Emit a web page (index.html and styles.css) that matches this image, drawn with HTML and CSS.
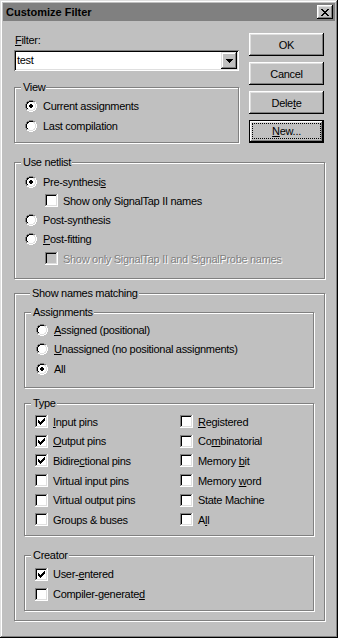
FILE: index.html
```
<!DOCTYPE html>
<html lang="en">
<head>
  <meta charset="UTF-8">
  <title>Customize Filter</title>
  <link rel="stylesheet" href="styles.css">
</head>
<body>
  <svg class="defs" width="0" height="0">
    <symbol id="radio" viewBox="0 0 12 12">
      <path fill="#fff" d="M4 2h4v1h1v1h1v4h-1v1h-1v1H4v-1H3v-1H2V4h1V3h1z"/>
      <path fill="#808080" d="M4 0h4v1H4z M2 1h2v1H2z M8 1h2v1H8z M1 2h1v2H1z M0 4h1v4H0z M1 8h1v2H1z"/>
      <path fill="#000" d="M4 1h4v1H4z M2 2h2v1H2z M2 3h1v1H2z M1 4h1v4H1z M2 8h1v1H2z"/>
      <path fill="#dfdfdf" d="M8 2h2v1H8z M9 3h1v1H9z M10 4h1v4h-1z M9 8h1v1H9z M2 9h2v1H2z M8 9h2v1H8z M4 10h4v1H4z"/>
      <path fill="#fff" d="M10 2h1v2h-1z M11 4h1v4h-1z M10 8h1v2h-1z M2 10h2v1H2z M8 10h2v1H8z M4 11h4v1H4z"/>
    </symbol>
    <symbol id="dot" viewBox="0 0 12 12">
      <path fill="#000" d="M5 4h2v1h1v2h-1v1H5v-1H4V5h1z"/>
    </symbol>
    <symbol id="box" viewBox="0 0 13 13">
      <rect x="2" y="2" width="9" height="9" fill="currentColor"/>
      <path fill="#808080" d="M0 0h12v1H1v11H0z"/>
      <path fill="#000" d="M1 1h10v1H2v9H1z"/>
      <path fill="#dfdfdf" d="M11 1h1v11H1v-1h10z"/>
      <path fill="#fff" d="M12 0h1v13H0v-1h12z"/>
    </symbol>
    <symbol id="tick" viewBox="0 0 13 13">
      <path fill="#000" d="M9 3h1v1H9z M8 4h2v1H8z M3 5h1v1H3z M7 5h3v1H7z M3 6h2v1H3z M6 6h3v1H6z M3 7h5v1H3z M4 8h3v1H4z M5 9h1v1H5z"/>
    </symbol>
  </svg>

  <div class="window">
    <div class="titlebar">
      <span class="title">Customize Filter</span>
      <span class="close">
        <svg width="8" height="7" viewBox="0 0 8 7" shape-rendering="crispEdges"><path fill="#000" d="M0 0h2v1H0z M6 0h2v1H6z M1 1h2v1H1z M5 1h2v1H5z M2 2h4v1H2z M3 3h2v1H3z M2 4h4v1H2z M1 5h2v1H1z M5 5h2v1H5z M0 6h2v1H0z M6 6h2v1H6z"/></svg>
      </span>
    </div>

    <div class="dialog">
      <div class="top">
        <div class="left">
          <div class="field-label"><u>F</u>ilter:</div>
          <div class="combo">
            <span class="combo-text">test</span>
            <span class="combo-btn">
              <svg width="7" height="4" viewBox="0 0 7 4" shape-rendering="crispEdges"><path fill="#000" d="M0 0h7v1H0z M1 1h5v1H1z M2 2h3v1H2z M3 3h1v1H3z"/></svg>
            </span>
          </div>

          <div class="group view">
            <div class="group-title">View</div>
            <div class="rows">
              <div class="row"><svg class="radio"><use href="#radio"/><use href="#dot"/></svg><span>Current assignments</span></div>
              <div class="row"><svg class="radio"><use href="#radio"/></svg><span>Last compilation</span></div>
            </div>
          </div>
        </div>

        <div class="buttons">
          <div class="btn"><span>OK</span></div>
          <div class="btn"><span>Cancel</span></div>
          <div class="btn"><span>Dele<u>t</u>e</span></div>
          <div class="btn default"><span class="focus"><span><u>N</u>ew...</span></span></div>
        </div>
      </div>

      <div class="group netlist">
        <div class="group-title">Use netlist</div>
        <div class="rows">
          <div class="row"><svg class="radio"><use href="#radio"/><use href="#dot"/></svg><span>Pre-synthesi<u>s</u></span></div>
          <div class="row indent"><svg class="check"><use href="#box"/></svg><span>Show only SignalTap II names</span></div>
          <div class="row"><svg class="radio"><use href="#radio"/></svg><span>Post-synthesis</span></div>
          <div class="row"><svg class="radio"><use href="#radio"/></svg><span><u>P</u>ost-fitting</span></div>
          <div class="row indent disabled"><svg class="check"><use href="#box"/></svg><span>Show only SignalTap II and SignalProbe names</span></div>
        </div>
      </div>

      <div class="group matching">
        <div class="group-title">Show names matching</div>

        <div class="group assignments">
          <div class="group-title">Assignments</div>
          <div class="rows">
            <div class="row"><svg class="radio"><use href="#radio"/></svg><span><u>A</u>ssigned (positional)</span></div>
            <div class="row"><svg class="radio"><use href="#radio"/></svg><span><u>U</u>nassigned (no positional assignments)</span></div>
            <div class="row"><svg class="radio"><use href="#radio"/><use href="#dot"/></svg><span>All</span></div>
          </div>
        </div>

        <div class="group type">
          <div class="group-title">Type</div>
          <div class="rows type-grid">
            <div class="row"><svg class="check"><use href="#box"/><use href="#tick"/></svg><span><u>I</u>nput pins</span></div>
            <div class="row"><svg class="check"><use href="#box"/><use href="#tick"/></svg><span><u>O</u>utput pins</span></div>
            <div class="row"><svg class="check"><use href="#box"/><use href="#tick"/></svg><span>Bidire<u>c</u>tional pins</span></div>
            <div class="row"><svg class="check"><use href="#box"/></svg><span>Virtual input pins</span></div>
            <div class="row"><svg class="check"><use href="#box"/></svg><span>Virtual output pins</span></div>
            <div class="row"><svg class="check"><use href="#box"/></svg><span>Groups &amp; buses</span></div>
            <div class="row"><svg class="check"><use href="#box"/></svg><span><u>R</u>egistered</span></div>
            <div class="row"><svg class="check"><use href="#box"/></svg><span>Co<u>m</u>binatorial</span></div>
            <div class="row"><svg class="check"><use href="#box"/></svg><span>Memory <u>b</u>it</span></div>
            <div class="row"><svg class="check"><use href="#box"/></svg><span>Memory <u>w</u>ord</span></div>
            <div class="row"><svg class="check"><use href="#box"/></svg><span>State Machine</span></div>
            <div class="row"><svg class="check"><use href="#box"/></svg><span>A<u>l</u>l</span></div>
          </div>
        </div>

        <div class="group creator">
          <div class="group-title">Creator</div>
          <div class="rows">
            <div class="row"><svg class="check"><use href="#box"/><use href="#tick"/></svg><span>User-<u>e</u>ntered</span></div>
            <div class="row"><svg class="check"><use href="#box"/></svg><span>Compiler-generate<u>d</u></span></div>
          </div>
        </div>
      </div>
    </div>
  </div>
</body>
</html>
```

FILE: styles.css
```
body {
  margin: 0;
  background: #c0c0c0;
  font-family: "Liberation Sans", Arial, sans-serif;
  font-size: 11px;
  color: #000;
}
.defs {
  position: absolute;
  width: 0;
  height: 0;
}
.window {
  width: 338px;
  height: 638px;
  box-sizing: border-box;
  padding: 3px;
  background: #c0c0c0;
  box-shadow: inset -1px -1px #000, inset 1px 1px #dfdfdf, inset -2px -2px #808080, inset 2px 2px #fff;
}
.titlebar {
  height: 18px;
  background: #808080;
  display: flex;
  align-items: center;
  justify-content: space-between;
  padding: 0 2px 0 3px;
}
.title {
  font-weight: bold;
  line-height: 18px;
}
.close {
  width: 16px;
  height: 14px;
  display: flex;
  align-items: center;
  justify-content: center;
  background: #c0c0c0;
  box-shadow: inset -1px -1px #000, inset 1px 1px #fff, inset -2px -2px #808080, inset 2px 2px #dfdfdf;
}
.dialog {
  padding: 12px 10px 0 11px;
  letter-spacing: -0.3px;
}
.top {
  display: flex;
  gap: 10px;
  align-items: flex-start;
}
.left {
  width: 225px;
  padding-top: 1px;
}
.field-label {
  line-height: 13px;
  padding-left: 1px;
}
.combo {
  margin-top: 3px;
  height: 21px;
  box-sizing: border-box;
  padding: 2px;
  display: flex;
  background: #fff;
  box-shadow: inset 1px 1px #808080, inset -1px -1px #fff, inset 2px 2px #000, inset -2px -2px #dfdfdf;
}
.combo-text {
  flex: 1;
  padding-left: 1px;
  line-height: 17px;
}
.combo-btn {
  width: 16px;
  height: 17px;
  display: flex;
  align-items: center;
  justify-content: center;
  background: #c0c0c0;
  box-shadow: inset -1px -1px #000, inset 1px 1px #dfdfdf, inset -2px -2px #808080, inset 2px 2px #fff;
}
.buttons {
  width: 75px;
  display: flex;
  flex-direction: column;
  gap: 6px;
}
.btn {
  height: 23px;
  box-sizing: border-box;
  display: flex;
  align-items: center;
  justify-content: center;
  box-shadow: inset -1px -1px #000, inset 1px 1px #fff, inset -2px -2px #808080, inset 2px 2px #dfdfdf;
}
.btn.default {
  border: 1px solid #000;
  padding: 2px 2px 3px 2px;
  align-items: stretch;
}
.focus {
  flex: 1;
  border: 1px dotted #000;
  display: flex;
  align-items: center;
  justify-content: center;
}

.group {
  box-sizing: border-box;
  border: 1px solid #808080;
  box-shadow: 1px 1px 0 #fff, inset 1px 1px 0 #fff;
}
.group-title {
  width: max-content;
  margin: -7px 0 0 6px;
  padding: 0 1px 0 2px;
  background: #c0c0c0;
  line-height: 13px;
}
.rows {
  padding: 2px 0 0 10px;
}
.row {
  height: 19.6px;
  display: flex;
  align-items: center;
  white-space: nowrap;
}
.row.indent {
  padding-left: 20px;
}
.radio {
  width: 12px;
  height: 12px;
  margin-right: 6px;
  flex: none;
  shape-rendering: crispEdges;
}
.check {
  width: 13px;
  height: 13px;
  margin-right: 5px;
  flex: none;
  color: #fff;
  shape-rendering: crispEdges;
}
.disabled {
  color: #808080;
  text-shadow: 1px 1px 0 #fff;
}
.disabled .check {
  color: #c0c0c0;
}

.view {
  margin-top: 16px;
  height: 56px;
}
.view .row {
  height: 20px;
}
.netlist {
  margin-top: 19px;
  height: 117px;
}
.netlist .rows {
  padding-top: 3px;
}
.netlist .row {
  height: 19.25px;
}
.matching {
  margin-top: 14px;
  height: 328px;
  padding: 0 10px 0 9px;
}
.assignments {
  margin-top: 12px;
  height: 76px;
}
.assignments .rows {
  padding: 1px 0 0 11px;
}
.type {
  margin-top: 15px;
  height: 133px;
}
.type-grid {
  display: grid;
  grid-template-columns: 145px 1fr;
  grid-template-rows: repeat(6, 19.6px);
  grid-auto-flow: column;
}
.creator {
  margin-top: 19px;
  height: 56px;
}
.creator .row {
  height: 20px;
}
```
